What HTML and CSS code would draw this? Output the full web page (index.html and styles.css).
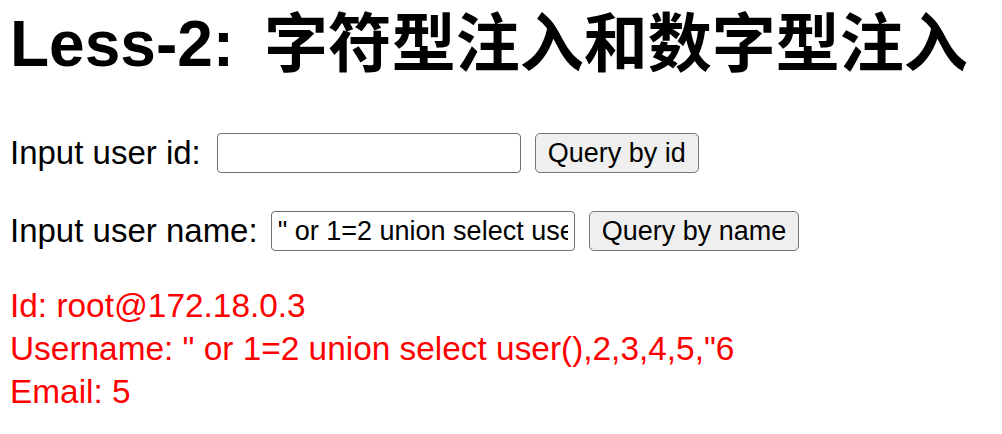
FILE: index.html
```html
<!DOCTYPE html>
<html lang="zh-CN">
<head>
<meta charset="utf-8">
<title>Less-2</title>
<link rel="stylesheet" href="styles.css">
</head>
<body>
<h1 class="title">Less-2: 字符型注入和数字型注入</h1>
<form class="query-row row-id">
  <label class="query-label" for="uid">Input user id:</label>
  <input class="query-input" id="uid" type="text" value="">
  <button class="query-btn" type="button">Query by id</button>
</form>
<form class="query-row row-name">
  <label class="query-label" for="uname">Input user name:</label>
  <input class="query-input" id="uname" type="text" value="&quot; or 1=2 union select user(),2,3,4,5,&quot;6">
  <button class="query-btn" type="button">Query by name</button>
</form>
<div class="result">
  <div class="result-line">Id: root@172.18.0.3</div>
  <div class="result-line">Username: " or 1=2 union select user(),2,3,4,5,"6</div>
  <div class="result-line">Email: 5</div>
</div>
</body>
</html>
```

FILE: styles.css
```css
html, body {
  background: #ffffff;
}
body {
  margin: 0;
  padding: 0 10px;
  font-family: "Liberation Sans", "Noto Sans CJK SC", sans-serif;
  font-size: 33px;
  color: #000000;
}
.title {
  margin: 6px 0 0;
  font-size: 64px;
  line-height: 76px;
  font-weight: bold;
  word-spacing: 12px;
  font-family: "Liberation Sans", "Noto Sans CJK SC", sans-serif;
}
.query-row {
  display: flex;
  align-items: center;
  height: 40px;
  margin: 0;
}
.row-id {
  margin-top: 51px;
}
.row-name {
  margin-top: 38px;
}
.query-label {
  line-height: 38px;
  white-space: nowrap;
}
.row-id .query-label {
  padding-right: 2px;
}
.query-input {
  box-sizing: border-box;
  width: 304px;
  height: 40px;
  margin: 0 0 0 14px;
  padding: 0 6px;
  border: 1px solid #6f6f6f;
  border-radius: 4px;
  background: #ffffff;
  font-family: "Liberation Sans", "Noto Sans CJK SC", sans-serif;
  font-size: 27px;
  color: #000000;
  outline: none;
}
.row-name .query-input {
  margin-left: 13px;
}
.query-btn {
  box-sizing: border-box;
  height: 40px;
  margin: 0 0 0 14px;
  padding: 0 12px;
  border: 1px solid #767676;
  border-radius: 5px;
  background: #efefef;
  font-family: "Liberation Sans", sans-serif;
  font-size: 27px;
  color: #000000;
}
.result {
  margin-top: 33px;
  color: #ff0000;
  font-size: 33.4px;
  line-height: 43px;
}
```
